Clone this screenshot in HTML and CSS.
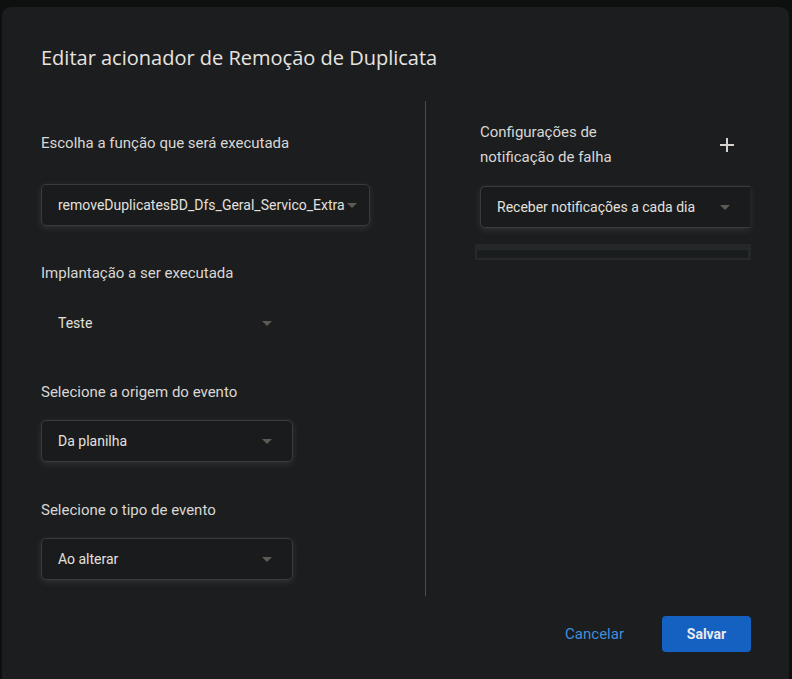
FILE: index.html
```html
<!DOCTYPE html>
<html lang="pt">
<head>
<meta charset="utf-8">
<title>Editar acionador</title>
<link rel="stylesheet" href="styles.css">
</head>
<body>
<div class="dialog">
  <h1 class="title">Editar acionador de Remoção de Duplicata</h1>
  <div class="content">
    <div class="col-left">
      <div class="label l1">Escolha a função que será executada</div>
      <div class="select boxed wide">
        <span class="value">removeDuplicatesBD_Dfs_Geral_Servico_Extra</span>
        <span class="arrow"></span>
      </div>
      <div class="label l2">Implantação a ser executada</div>
      <div class="select plain">
        <span class="value">Teste</span>
        <span class="arrow"></span>
      </div>
      <div class="label l3">Selecione a origem do evento</div>
      <div class="select boxed">
        <span class="value">Da planilha</span>
        <span class="arrow"></span>
      </div>
      <div class="label l3">Selecione o tipo de evento</div>
      <div class="select boxed">
        <span class="value">Ao alterar</span>
        <span class="arrow"></span>
      </div>
    </div>
    <div class="divider"></div>
    <div class="col-right">
      <div class="notif-head">
        <div class="notif-title">Configurações de notificação de falha</div>
        <svg class="plus" width="16" height="16" viewBox="0 0 16 16"><path d="M8 1v14M1 8h14" stroke="#d6d3ce" stroke-width="2" fill="none"/></svg>
      </div>
      <div class="select boxed open-right">
        <span class="value">Receber notificações a cada dia</span>
        <span class="arrow"></span>
      </div>
      <div class="bar"><div class="bar-inner"></div></div>
    </div>
  </div>
  <div class="footer">
    <button class="btn-text">Cancelar</button>
    <button class="btn-primary">Salvar</button>
  </div>
</div>
</body>
</html>
```
FILE: styles.css
```css
html, body {
  margin: 0;
  padding: 0;
  background: #0e1010;
  height: 679px;
  overflow: hidden;
}
body {
  font-family: Roboto, "Liberation Sans", sans-serif;
  color: #e3e1dd;
}
.dialog {
  margin: 7px 0 0 2px;
  width: 787px;
  height: 690px;
  background: #1c1d1f;
  border-radius: 9px;
  box-sizing: border-box;
  overflow: hidden;
}
.title {
  margin: 0;
  padding: 39px 0 0 39px;
  font-family: "Open Sans", Roboto, sans-serif;
  font-size: 20px;
  line-height: 24px;
  font-weight: 400;
  color: #e6e4e0;
  height: 24px;
}
.content {
  margin-top: 31px;
  display: grid;
  grid-template-columns: 423px 1px 1fr;
  height: 495px;
}
.divider {
  background: #4a4b4d;
}
.col-left {
  padding: 32px 0 0 39px;
  display: flex;
  flex-direction: column;
  align-items: flex-start;
}
.label {
  font-size: 15px;
  line-height: 20px;
  color: #d9d7d3;
}
.l2 { margin-top: 37px; }
.l3 { margin-top: 38px; }
.select {
  box-sizing: border-box;
  height: 42px;
  width: 252px;
  display: flex;
  align-items: center;
  padding: 0 20px 0 16px;
  font-size: 14px;
  color: #e3e1dd;
  margin-top: 18px;
}
.l1 + .select { margin-top: 31px; }
.l2 + .select { margin-top: 19px; }
.boxed {
  border: 1px solid #3a3b3d;
  border-radius: 5px;
  background: #1a1b1d;
  box-shadow: 0 2px 7px rgba(200, 200, 200, 0.13);
}
.plain {
  border: 1px solid transparent;
}
.wide {
  width: 329px;
  padding-right: 12px;
}
.value {
  flex: 1;
  white-space: nowrap;
}
.arrow {
  flex: none;
  width: 0;
  height: 0;
  border-left: 5px solid transparent;
  border-right: 5px solid transparent;
  border-top: 5px solid #5d5a55;
}
.wide .arrow {
  margin-left: -3px;
}
.col-right {
  padding: 19px 38px 0 49px;
  display: flex;
  flex-direction: column;
}
.notif-head {
  display: flex;
  align-items: center;
  justify-content: space-between;
  padding-left: 5px;
  padding-right: 16px;
}
.notif-title {
  width: 160px;
  font-size: 15px;
  line-height: 25px;
  color: #d9d7d3;
}
.open-right {
  width: 270px;
  margin-left: 5px;
  margin-top: 16px;
  border-right: none;
  border-radius: 5px 0 0 5px;
}
.bar {
  margin-top: 16px;
  height: 16px;
  background: #24282a;
  padding: 5px 2px 1px 1px;
  box-sizing: border-box;
}
.bar-inner {
  height: 100%;
  background: #1a1d1e;
  border: 1px solid #272b2c;
  box-sizing: border-box;
}
.footer {
  margin-top: 20px;
  display: flex;
  justify-content: flex-end;
  align-items: center;
  padding-right: 38px;
}
.btn-text {
  background: none;
  border: none;
  font-family: Roboto, "Liberation Sans", sans-serif;
  font-size: 15px;
  color: #3f8fda;
  padding: 0 19px;
  height: 36px;
  margin-right: 19px;
}
.btn-primary {
  background: #1461c2;
  border: none;
  border-radius: 4px;
  width: 89px;
  height: 36px;
  font-family: Roboto, "Liberation Sans", sans-serif;
  font-size: 14px;
  font-weight: 700;
  color: #e8eaed;
}
```
